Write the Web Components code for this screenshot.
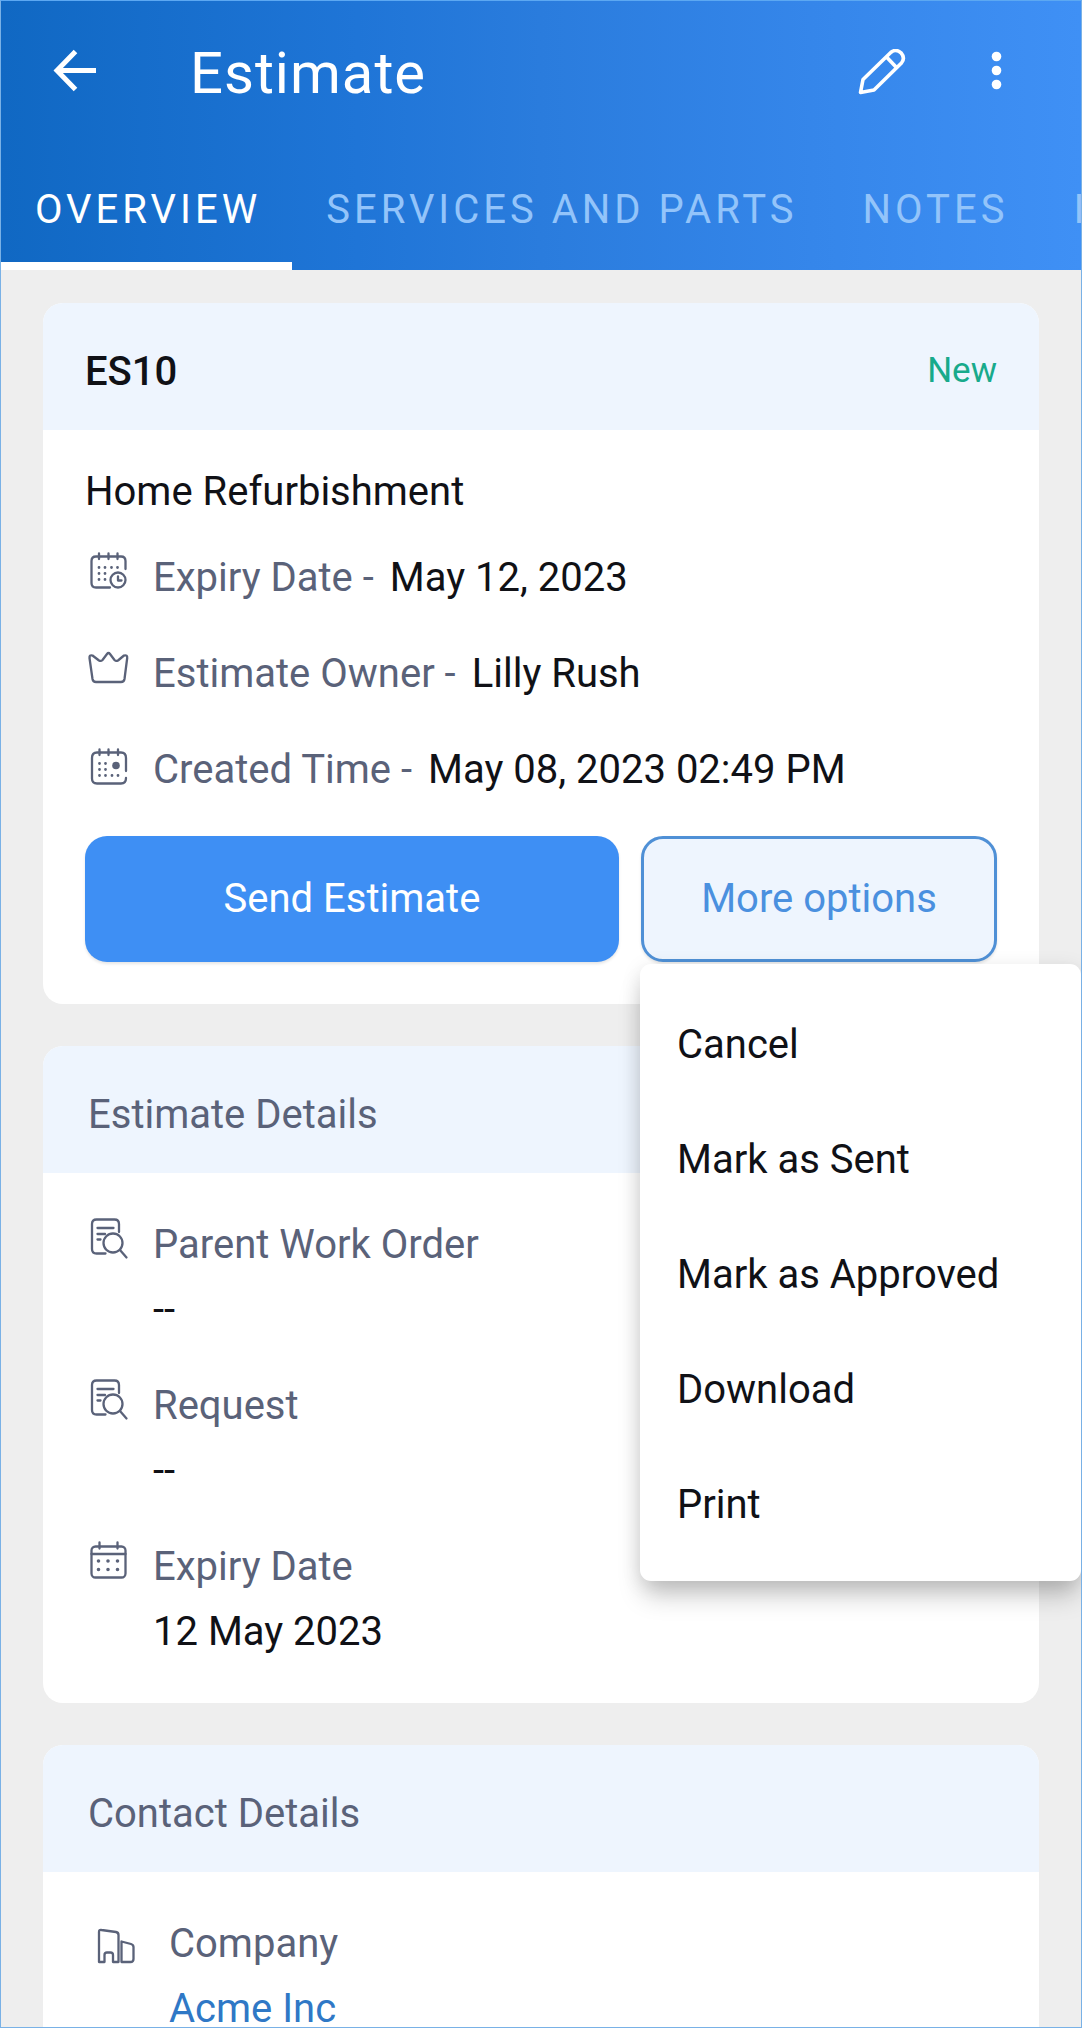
<!DOCTYPE html>
<html lang="en">
<head>
<meta charset="utf-8">
<meta name="viewport" content="width=device-width, initial-scale=1">
<title>Estimate</title>
<style>
  body {
    margin: 0;
    font: 400 40px/48px Roboto, "Liberation Sans", sans-serif;
    --ink: #101116;
    --muted: #5a6279;
    --tint: #eef5fe;
    --accent: #3e8ff4;
    --outline: #4f90d6;
    color: var(--ink);
  }
</style>
</head>
<body>
<fsm-screen>
  <fsm-app-bar slot="top">Estimate</fsm-app-bar>
  <fsm-tabs slot="top">
    <fsm-tab selected>OVERVIEW</fsm-tab>
    <fsm-tab>SERVICES AND PARTS</fsm-tab>
    <fsm-tab>NOTES</fsm-tab>
    <fsm-tab>I</fsm-tab>
  </fsm-tabs>

  <fsm-card>
    <fsm-record-title slot="title">ES10<span slot="status">New</span></fsm-record-title>
    <fsm-summary>
      <span slot="name">Home Refurbishment</span>
      <fsm-fact icon="calendar-clock">Expiry Date -<span slot="value">May 12, 2023</span></fsm-fact>
      <fsm-fact icon="crown">Estimate Owner -<span slot="value">Lilly Rush</span></fsm-fact>
      <fsm-fact icon="calendar-day">Created Time -<span slot="value">May 08, 2023 02:49 PM</span></fsm-fact>
      <fsm-actions slot="actions">
        <fsm-button kind="primary">Send Estimate</fsm-button>
        <fsm-button kind="outline">More options
          <fsm-menu slot="menu">
            <fsm-menu-item>Cancel</fsm-menu-item>
            <fsm-menu-item>Mark as Sent</fsm-menu-item>
            <fsm-menu-item>Mark as Approved</fsm-menu-item>
            <fsm-menu-item>Download</fsm-menu-item>
            <fsm-menu-item>Print</fsm-menu-item>
          </fsm-menu>
        </fsm-button>
      </fsm-actions>
    </fsm-summary>
  </fsm-card>

  <fsm-card>
    <span slot="title">Estimate Details</span>
    <fsm-fields>
      <fsm-field icon="doc-search">Parent Work Order<span slot="value">--</span></fsm-field>
      <fsm-field icon="doc-search">Request<span slot="value">--</span></fsm-field>
      <fsm-field icon="calendar">Expiry Date<span slot="value">12 May 2023</span></fsm-field>
    </fsm-fields>
  </fsm-card>

  <fsm-card>
    <span slot="title">Contact Details</span>
    <fsm-fields>
      <fsm-field icon="building" indented href="#acme">Company<span slot="value">Acme Inc</span></fsm-field>
    </fsm-fields>
  </fsm-card>
</fsm-screen>

<script>
const ICONS = {
  'calendar-clock': `
    <path d="M25 36.500H11Q6.500 36.500 6.500 32V10Q6.500 5.500 11 5.500H36Q40.500 5.500 40.500 10V18"/>
    <path d="M14 2.500V8M23.500 2.500V8M32.500 2.500V8"/>
    <circle cx="33" cy="29" r="7.500"/><path d="M33 25.500V29.500H36.500"/>
    <path class="dots" d="M14 16.500h0M20 16.500h0M26.500 16.500h0M32.500 16.500h0M14 22.500h0M20 22.500h0M14 28.500h0M20 28.500h0"/>`,
  'crown': `
    <path d="M4.500 11Q4.200 7.500 7.500 8.500L14 13.500Q16 14.500 17.500 13L22 7Q23.500 5 25 7L29.500 13Q31 14.500 33 13.500L39 8.500Q42.500 7.500 42.200 11L39.500 32Q39 35 36 35H11Q8 35 7.500 32Z"/>`,
  'calendar-day': `
    <path d="M41 28V15Q41 9.500 36 9.500H12Q7 9.500 7 15V35.500Q7 40.500 12 40.500H36Q41 40.500 41 35"/>
    <path d="M14.500 6.500V12M23.500 6.500V12M33 6.500V12"/>
    <circle cx="31" cy="22.500" r="3.800" fill="currentColor" stroke="none"/>
    <path class="dots" d="M14.500 20.500h0M20.500 20.500h0M14.500 26.500h0M20.500 26.500h0M14.500 32.500h0M20.500 32.500h0M27 32.500h0M33 32.500h0"/>`,
  'doc-search': `
    <path d="M20.500 35.500H11.500Q7 35.500 7 31V6Q7 1.500 11.500 1.500H29.500Q34 1.500 34 6V14"/>
    <path d="M12.500 10H28.500M12.500 16H20M12.500 21.500H15.500"/>
    <circle cx="28" cy="25" r="9.500"/><path d="M35 32L41.500 39.500"/>`,
  'calendar': `
    <rect x="6.500" y="6.500" width="34" height="31" rx="4"/>
    <path d="M6.500 14H40.500M14.500 2.500V8.500M32.500 2.500V8.500"/>
    <path class="dots big" d="M13.500 21h0M23 21h0M32.500 21h0M13.500 29.500h0M23 29.500h0M32.500 29.500h0"/>`,
  'building': `
    <path d="M6 43V15Q6 12.500 8.500 13L23 15Q25.500 15.500 25.500 18V45H20V38Q20 35.500 17.500 35.500H14Q11.500 35.500 11.500 38V45H6Z"/>
    <path d="M28.500 45V24.500L38 27Q40.500 27.800 40.500 30V42Q40.500 45 37.500 45Z"/>`
};

function define(name, html, setup) {
  const template = document.createElement('template');
  template.innerHTML = html;
  customElements.define(name, class extends HTMLElement {
    static observedAttributes = ['name'];
    constructor() {
      super();
      this.attachShadow({ mode: 'open' }).append(template.content.cloneNode(true));
    }
    connectedCallback() {
      if (setup) setup(this, this.shadowRoot);
    }
    attributeChangedCallback() {
      if (setup) setup(this, this.shadowRoot);
    }
  });
}

define('fsm-icon', `
  <style>
    :host { display: block; flex: none; width: 44px; height: 44px; margin-top: -3px; color: var(--muted); }
    svg { display: block; overflow: visible; fill: none; stroke: currentColor; stroke-width: 2.300; stroke-linecap: round; stroke-linejoin: round; }
    .dots { stroke-width: 2.800; }
    .big { stroke-width: 3.600; }
  </style>
  <svg width="44" height="44" viewBox="0 0 44 44" aria-hidden="true"></svg>`,
  (host, root) => { root.querySelector('svg').innerHTML = ICONS[host.getAttribute('name')] || ''; });

define('fsm-screen', `
  <style>
    :host { display: flex; flex-direction: column; box-sizing: border-box; height: 100vh; overflow: hidden; border: 1px solid #79b1e6; border-top-color: #5ca8f2; background: #eee; }
    header { flex: none; background: linear-gradient(90deg, #1068c3, #1f75d7 33%, #2a7cdd 50%, #3586ea 75%, #3f90f5); color: #fff; }
    main { flex: 1; min-height: 0; overflow: hidden; display: flex; flex-direction: column; gap: 42px; padding: 33px 42px 0; }
  </style>
  <header><slot name="top"></slot></header>
  <main><slot></slot></main>`);

define('fsm-app-bar', `
  <style>
    :host { display: block; }
    div { display: flex; align-items: center; height: 144px; padding: 0 61px 0 48px; }
    h1 { flex: 1; margin: 0 0 0 93px; font-size: 58px; line-height: 68px; font-weight: 400; letter-spacing: 1px; }
    button { display: block; padding: 0; border: 0; background: none; color: inherit; width: 48px; height: 48px; }
    button + button { margin-left: 66px; }
    svg { display: block; fill: none; stroke: currentColor; }
  </style>
  <div>
    <button aria-label="Back"><svg width="48" height="48" viewBox="0 0 48 48" stroke-width="5"><path d="M26.500 2.500L8 21.500L26.500 40.500M8 21.500H47"/></svg></button>
    <h1><slot></slot></h1>
    <button aria-label="Edit"><svg width="48" height="48" viewBox="0 0 48 48" stroke-width="3.600" stroke-linejoin="round"><path d="M2.500 43.500L5 30.500L33 3.300Q38 -0.500 43 3.800Q47.500 9 43.500 14L16 41Z"/><path d="M28.500 8L38.500 18.500"/></svg></button>
    <button aria-label="More"><svg width="48" height="48" viewBox="0 0 48 48"><g fill="currentColor" stroke="none"><circle cx="24.500" cy="7.500" r="4.800"/><circle cx="24.500" cy="21.500" r="4.800"/><circle cx="24.500" cy="35.500" r="4.800"/></g></svg></button>
  </div>`);

define('fsm-tabs', `
  <style>
    :host { display: flex; overflow: hidden; }
  </style>
  <slot></slot>`);

define('fsm-tab', `
  <style>
    :host { display: block; flex: none; }
    button { display: block; box-sizing: border-box; height: 125px; padding: 13px 31px 0 34px; border: 0; border-bottom: 8px solid transparent; background: none; color: #93c4fa; font: inherit; letter-spacing: 4px; white-space: nowrap; }
    :host([selected]) button { color: #fff; border-bottom-color: #fff; }
  </style>
  <button role="tab"><slot></slot></button>`);

define('fsm-card', `
  <style>
    :host { display: block; flex: none; border-radius: 20px; background: #fff; }
    h2 { margin: 0; padding: 45px 42px 34px; border-radius: 20px 20px 0 0; background: var(--tint); color: var(--muted); font: inherit; }
    h2 ::slotted(span) { padding-left: 3px; }
  </style>
  <h2><slot name="title"></slot></h2>
  <slot></slot>`);

define('fsm-record-title', `
  <style>
    :host { display: flex; justify-content: space-between; color: var(--ink); font-weight: 500; }
    .status { color: #18aa8b; font-size: 35px; line-height: 45px; font-weight: 400; }
  </style>
  <span><slot></slot></span><span class="status"><slot name="status"></slot></span>`);

define('fsm-summary', `
  <style>
    :host { display: block; padding: 38px 42px 42px; }
    .facts { display: flex; flex-direction: column; gap: 48px; margin: 38px 0 42px; }
  </style>
  <slot name="name"></slot>
  <div class="facts"><slot></slot></div>
  <slot name="actions"></slot>`);

define('fsm-fact', `
  <style>
    :host { display: flex; gap: 24px; }
    .label { color: var(--muted); }
    .value { margin-left: 16px; }
  </style>
  <fsm-icon></fsm-icon>
  <div><span class="label"><slot></slot></span><span class="value"><slot name="value"></slot></span></div>`,
  (host, root) => root.querySelector('fsm-icon').setAttribute('name', host.getAttribute('icon')));

define('fsm-actions', `
  <style>
    :host { display: flex; gap: 22px; }
  </style>
  <slot></slot>`);

define('fsm-button', `
  <style>
    :host { display: block; position: relative; flex: 2 1 0; min-width: 0; }
    :host([kind="primary"]) { flex-grow: 3; }
    button { display: block; box-sizing: border-box; width: 100%; height: 126px; padding: 0; border: 0; border-radius: 22px; background: var(--accent); color: #fff; font: inherit; box-shadow: 0 2px 3px rgba(0, 0, 0, .1); }
    :host([kind="outline"]) button { border: 3px solid var(--outline); background: var(--tint); color: #4a90df; }
  </style>
  <button><slot></slot></button>
  <slot name="menu"></slot>`);

define('fsm-menu', `
  <style>
    :host { display: block; position: absolute; z-index: 2; top: 128px; left: -1px; width: 441px; box-sizing: border-box; padding: 22px 0 20px; border-radius: 11px; background: #fff; box-shadow: 0 18px 26px -4px rgba(0, 0, 0, .22), 0 4px 20px rgba(0, 0, 0, .1); }
  </style>
  <div role="menu"><slot></slot></div>`);

define('fsm-menu-item', `
  <style>
    :host { display: block; }
    button { display: block; width: 100%; height: 115px; padding: 2px 37px 0; border: 0; background: none; color: inherit; font: inherit; text-align: left; white-space: nowrap; }
  </style>
  <button role="menuitem"><slot></slot></button>`);

define('fsm-fields', `
  <style>
    :host { display: flex; flex-direction: column; gap: 48px; padding: 48px 42px 47px; }
  </style>
  <slot></slot>`);

define('fsm-field', `
  <style>
    :host { display: flex; gap: 24px; }
    :host([indented]) { gap: 32px; padding-left: 8px; }
    div { display: flex; flex-direction: column; gap: 17px; }
    .label { color: var(--muted); }
    a { color: #2f78c6; text-decoration: none; }
  </style>
  <fsm-icon></fsm-icon>
  <div><span class="label"><slot></slot></span><span class="value"><slot name="value"></slot></span></div>`,
  (host, root) => {
    root.querySelector('fsm-icon').setAttribute('name', host.getAttribute('icon'));
    if (host.hasAttribute('href') && !root.querySelector('a')) {
      const link = document.createElement('a');
      link.href = host.getAttribute('href');
      const value = root.querySelector('.value');
      link.append(...value.childNodes);
      value.append(link);
    }
  });
</script>
</body>
</html>
